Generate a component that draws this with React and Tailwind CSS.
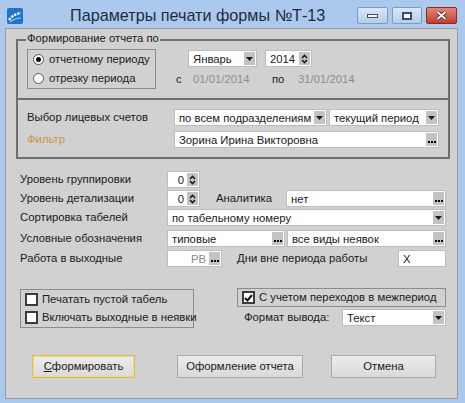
import React from "react";

const F = "font-['Liberation_Sans',Arial,sans-serif]";

function DropBtn() {
  return (
    <span className="w-[11px] h-[13px] bg-[#c3c3c3] flex items-center justify-center shrink-0">
      <svg width="7" height="4" viewBox="0 0 7 4">
        <path d="M0 0h7L3.5 4z" fill="#1a1a1a" />
      </svg>
    </span>
  );
}

function DotsBtn() {
  return (
    <span className="w-[11px] h-[13px] bg-[#c3c3c3] flex items-end justify-center pb-[3px] gap-[1px] shrink-0">
      <span className="w-[2px] h-[2px] bg-black" />
      <span className="w-[2px] h-[2px] bg-black" />
      <span className="w-[2px] h-[2px] bg-black" />
    </span>
  );
}

function SpinBtn() {
  return (
    <span className="w-[11px] h-[13px] bg-[#c3c3c3] flex items-center justify-center shrink-0">
      <svg width="7" height="10" viewBox="0 0 7 10">
        <path d="M1 4L3.5 1.5L6 4M1 6L3.5 8.5L6 6" stroke="#1a1a1a" strokeWidth="1.6" fill="none" />
      </svg>
    </span>
  );
}

function Field({ w, btn, children, right, muted }) {
  return (
    <div
      className={`h-[17px] bg-white border border-[#bdbdbd] flex items-center pl-[4px] pr-[1px] shrink-0 ${w}`}
    >
      <span
        className={`flex-1 text-[11.3px] leading-[14px] whitespace-nowrap overflow-hidden ${right ? "text-right pr-[3px]" : ""} ${muted ? "text-[#8a8a8a]" : "text-[#1a1a1a]"}`}
      >
        {children}
      </span>
      {btn === "drop" && <DropBtn />}
      {btn === "dots" && <DotsBtn />}
      {btn === "spin" && <SpinBtn />}
    </div>
  );
}

function Radio({ checked, label }) {
  return (
    <div className="h-[20px] flex items-center pl-[5px]">
      <span className="w-[11px] h-[11px] rounded-full bg-white border border-[#555] flex items-center justify-center shrink-0">
        {checked && <span className="w-[5px] h-[5px] rounded-full bg-black" />}
      </span>
      <span className="ml-[5px] text-[11.3px] text-[#1a1a1a] whitespace-nowrap">{label}</span>
    </div>
  );
}

function Check({ checked, label }) {
  return (
    <div className="h-[20px] flex items-center pl-[4px]">
      <span className="w-[13px] h-[13px] bg-white border-2 border-[#3c3c3c] flex items-center justify-center shrink-0">
        {checked && (
          <svg width="9" height="8" viewBox="0 0 9 8">
            <path d="M1 4l2.5 2.5L8 1" stroke="#111" strokeWidth="2" fill="none" />
          </svg>
        )}
      </span>
      <span className="ml-[4px] text-[11.3px] text-[#1a1a1a] whitespace-nowrap">{label}</span>
    </div>
  );
}

function Btn({ w, focused, children }) {
  return (
    <div
      className={`h-[23px] flex items-center justify-center text-[11.3px] text-[#1a1a1a] bg-gradient-to-b from-[#ececec] to-[#d9d9d9] border shrink-0 whitespace-nowrap ${w} ${focused ? "border-[#e3b94a] shadow-[inset_0_0_0_1px_#f2d98a]" : "border-[#a9a9a9]"}`}
    >
      {children}
    </div>
  );
}

export default function App() {
  return (
    <div className={`w-[465px] h-[403px] bg-[#abc9ec] flex flex-col overflow-hidden ${F}`}>
      {/* Title bar */}
      <div className="h-[28px] flex items-start shrink-0">
        <svg className="ml-[7px] mt-[8px]" width="16" height="16" viewBox="0 0 16 16">
          <rect width="16" height="16" rx="2" fill="#1e74c8" />
          <path d="M2 12C5 8 8 6 14 5" stroke="#fff" strokeWidth="2.2" fill="none" strokeDasharray="2.5 1" />
          <path d="M3 14C7 11 10 10 14 10" stroke="#9fd0ff" strokeWidth="1.2" fill="none" />
        </svg>
        <span className="ml-[47px] mt-[5px] text-[16.2px] leading-[20px] text-[#1d2c40] whitespace-nowrap">
          Параметры печати формы №Т-13
        </span>
        <div className="ml-auto mr-[8px] mt-[7px] flex gap-[4px]">
          <div className="w-[31px] h-[17px] rounded-[2px] border border-[#7d9cc2] bg-gradient-to-b from-[#dbe7f6] to-[#b6cde9] flex items-center justify-center">
            <span className="w-[11px] h-[4px] bg-[#f4f8fc] border border-[#3c4e66]" />
          </div>
          <div className="w-[30px] h-[17px] rounded-[2px] border border-[#7d9cc2] bg-gradient-to-b from-[#dbe7f6] to-[#b6cde9] flex items-center justify-center">
            <span className="w-[10px] h-[8px] border-2 border-[#3c4e66] bg-[#f4f8fc]" />
          </div>
          <div className="w-[31px] h-[17px] rounded-[2px] border border-[#8b2a20] bg-gradient-to-b from-[#e0877a] to-[#c23c2c] flex items-center justify-center">
            <svg width="11" height="9" viewBox="0 0 11 9">
              <path d="M1.5 1l8 7M9.5 1l-8 7" stroke="#3b1410" strokeWidth="3.4" />
              <path d="M1.5 1l8 7M9.5 1l-8 7" stroke="#fff" strokeWidth="2" />
            </svg>
          </div>
        </div>
      </div>

      {/* Client area */}
      <div className="ml-[5px] w-[453px] h-[371px] bg-[#d1d1d1] border border-[#9a9a9a] flex flex-col shrink-0 text-[11.3px]">
        {/* Group box */}
        <div className="mt-[10px] ml-[10px] w-[434px] h-[120px] border-2 border-[#6f6f6f] relative flex flex-col shrink-0">
          <span className="absolute left-[8px] top-[-10px] px-[1px] bg-[#d1d1d1] leading-[14px] text-[#1a1a1a] whitespace-nowrap">
            Формирование отчета по
          </span>
          <div className="h-[57px] flex items-start shrink-0">
            <div className="ml-[9px] mt-[8px] w-[129px] h-[40px] border border-[#8c8c8c] flex flex-col justify-center">
              <Radio checked label="отчетному периоду" />
              <Radio label="отрезку периода" />
            </div>
            <div className="ml-[20px] flex flex-col">
              <div className="ml-[12px] mt-[9px] flex gap-[8px]">
                <Field w="w-[69px]" btn="drop">Январь</Field>
                <Field w="w-[47px]" btn="spin">2014</Field>
              </div>
              <div className="mt-[5px] h-[14px] flex items-center">
                <span className="w-[17px] text-[#1a1a1a]">с</span>
                <span className="w-[79px] text-[#8d8d8d]">01/01/2014</span>
                <span className="w-[26px] text-[#1a1a1a]">по</span>
                <span className="text-[#8d8d8d]">31/01/2014</span>
              </div>
            </div>
          </div>
          <div className="h-[2px] bg-[#6f6f6f] shrink-0" />
          <div className="flex flex-col pt-[9px] pl-[9px] gap-[5px]">
            <div className="flex items-center">
              <span className="w-[147px] text-[#1a1a1a] whitespace-nowrap">Выбор лицевых счетов</span>
              <Field w="w-[153px]" btn="drop">по всем подразделениям</Field>
              <div className="w-[2px]" />
              <Field w="w-[110px]" btn="drop">текущий период</Field>
            </div>
            <div className="flex items-center">
              <span className="w-[147px] text-[#c8954a]">Фильтр</span>
              <Field w="w-[265px]" btn="dots">Зорина Ирина Викторовна</Field>
            </div>
          </div>
        </div>

        {/* Parameters */}
        <div className="ml-[14px] mt-[12px] flex flex-col text-[#1a1a1a] whitespace-nowrap">
          <div className="flex items-center">
            <span className="w-[147px]">Уровень группировки</span>
            <Field w="w-[33px]" btn="spin" right>0</Field>
          </div>
          <div className="mt-[2px] flex items-center">
            <span className="w-[147px]">Уровень детализации</span>
            <Field w="w-[33px]" btn="spin" right>0</Field>
            <span className="ml-[16px] w-[70px]">Аналитика</span>
            <Field w="w-[160px]" btn="dots">нет</Field>
          </div>
          <div className="mt-[2px] flex items-center">
            <span className="w-[147px]">Сортировка табелей</span>
            <Field w="w-[279px]" btn="drop">по табельному номеру</Field>
          </div>
          <div className="mt-[4px] flex items-center">
            <span className="w-[147px]">Условные обозначения</span>
            <Field w="w-[118px]" btn="dots">типовые</Field>
            <div className="w-[2px]" />
            <Field w="w-[159px]" btn="dots">все виды неявок</Field>
          </div>
          <div className="mt-[3px] flex items-center">
            <span className="w-[147px]">Работа в выходные</span>
            <Field w="w-[55px]" btn="dots" right muted>РВ</Field>
            <span className="ml-[15px] w-[161px]">Дни вне периода работы</span>
            <Field w="w-[48px]">X</Field>
          </div>
        </div>

        {/* Checkboxes */}
        <div className="ml-[14px] mt-[21px] flex items-start">
          <div className="mt-[1px] w-[174px] h-[39px] border border-[#8c8c8c] flex flex-col justify-center">
            <Check label="Печатать пустой табель" />
            <Check label="Включать выходные в неявки" />
          </div>
          <div className="ml-[43px] flex flex-col">
            <div className="w-[209px] h-[19px] border border-[#8c8c8c] flex items-center">
              <Check checked label="С учетом переходов в межпериод" />
            </div>
            <div className="mt-[2px] pl-[7px] flex items-center">
              <span className="w-[98px] text-[#1a1a1a] whitespace-nowrap">Формат вывода:</span>
              <Field w="w-[104px]" btn="drop">Текст</Field>
            </div>
          </div>
        </div>

        {/* Buttons */}
        <div className="ml-[26px] mt-[27px] flex items-center">
          <Btn w="w-[103px]" focused>
            <span>
              <span className="underline">С</span>формировать
            </span>
          </Btn>
          <div className="w-[42px]" />
          <Btn w="w-[126px]">Оформление отчета</Btn>
          <div className="w-[28px]" />
          <Btn w="w-[105px]">Отмена</Btn>
        </div>
      </div>
    </div>
  );
}
